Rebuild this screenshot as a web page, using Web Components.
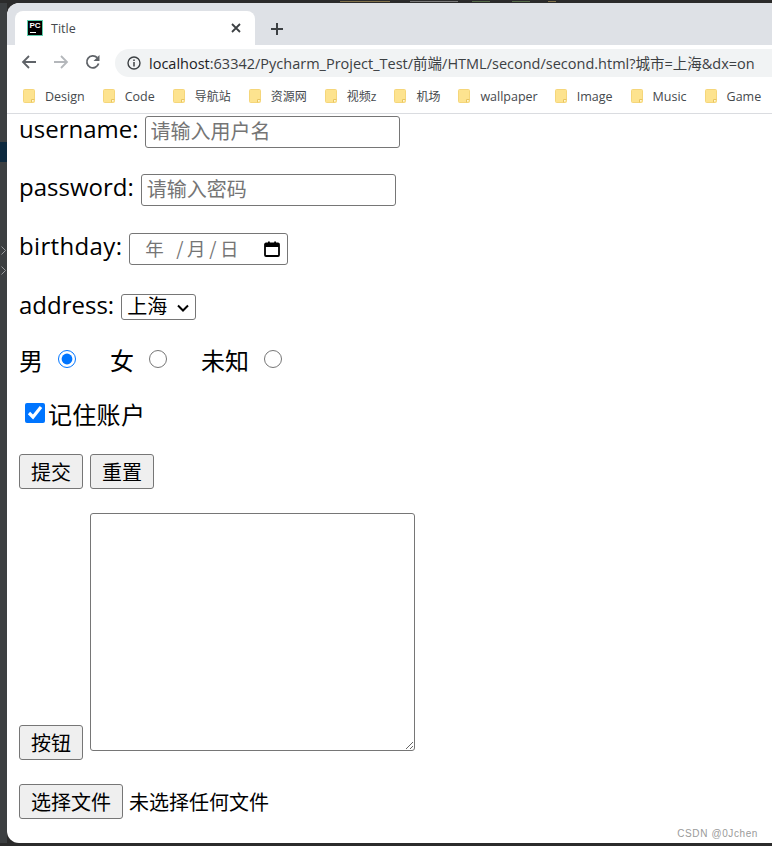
<!DOCTYPE html>
<html lang="zh-CN">
<head>
<meta charset="utf-8">
<title>Title</title>
<style>
  html, body { margin: 0; height: 100%; }
  body { background: #3c3f41; overflow: hidden; }
</style>
</head>
<body>
<browser-window>
  <form-page></form-page>
</browser-window>

<script>
const UI_FONT = `"Open Sans", "Noto Sans CJK SC", sans-serif`;

class BrowserTabs extends HTMLElement {
  constructor() {
    super();
    const shadow = this.attachShadow({ mode: 'open' });
    shadow.innerHTML = `
      <style>
        :host {
          display: flex;
          align-items: flex-end;
          height: 42px;
          padding-left: 8px;
          background: #dee1e6;
          border-radius: 12px 0 0 0;
          font: 12.5px ${UI_FONT};
          color: #45494d;
        }
        .tab {
          display: flex;
          align-items: center;
          box-sizing: border-box;
          width: 240px;
          height: 34px;
          padding: 0 14px 0 12px;
          background: #fff;
          border-radius: 8px 8px 0 0;
        }
        .favicon {
          position: relative;
          box-sizing: border-box;
          width: 16px;
          height: 16px;
          margin-right: 8px;
          background: #000;
          border: 1px solid #5fd0ad;
          color: #fff;
          font: bold 8px/9px "Liberation Sans", sans-serif;
          text-align: center;
        }
        .favicon::after {
          content: "";
          position: absolute;
          left: 2px;
          bottom: 2px;
          width: 6px;
          height: 1px;
          background: #fff;
        }
        .title { flex: 1; }
        svg { display: block; }
        .new { margin-left: 16px; margin-bottom: 10px; }
      </style>
      <div class="tab">
        <span class="favicon">PC</span>
        <span class="title">Title</span>
        <svg width="10" height="10" viewBox="0 0 10 10"><path d="M1 1l8 8M9 1l-8 8" stroke="#3c4043" stroke-width="1.8" fill="none"/></svg>
      </div>
      <svg class="new" width="12" height="12" viewBox="0 0 12 12"><path d="M6 0v12M0 6h12" stroke="#3c4043" stroke-width="2" fill="none"/></svg>
    `;
  }
}
customElements.define('browser-tabs', BrowserTabs);

class BrowserToolbar extends HTMLElement {
  constructor() {
    super();
    const shadow = this.attachShadow({ mode: 'open' });
    shadow.innerHTML = `
      <style>
        :host {
          display: flex;
          align-items: center;
          height: 34px;
          padding-left: 14px;
          background: #fff;
          font: 14.5px ${UI_FONT};
          color: #3c4043;
        }
        svg { display: block; flex: none; }
        .nav { display: flex; gap: 16px; margin-right: 14px; }
        .omnibox {
          flex: 1;
          display: flex;
          align-items: center;
          height: 28px;
          margin-top: 2px;
          padding-left: 12px;
          background: #f1f3f4;
          border-radius: 14px 0 0 14px;
          white-space: nowrap;
          overflow: hidden;
        }
        .omnibox svg { margin-right: 8px; }
        .url { margin-top: -2px; }
        .host { color: #202124; }
      </style>
      <div class="nav">
        <svg width="16" height="16" viewBox="0 0 16 16"><path d="M15 8H2M8 2L2 8l6 6" stroke="#5f6368" stroke-width="1.8" fill="none"/></svg>
        <svg width="16" height="16" viewBox="0 0 16 16"><path d="M1 8h13M8 2l6 6-6 6" stroke="#b4b7bb" stroke-width="1.8" fill="none"/></svg>
        <svg width="16" height="16" viewBox="0 0 16 16"><path d="M13.6 9.600A6 6 0 1 1 12.200 3.700" stroke="#5f6368" stroke-width="1.8" fill="none"/><path d="M14.500 1v6h-6z" fill="#5f6368"/></svg>
      </div>
      <div class="omnibox">
        <svg width="14" height="14" viewBox="0 0 14 14"><circle cx="7" cy="7" r="6" stroke="#3c4043" stroke-width="1.4" fill="none"/><path d="M7 6v4.400M7 3.400v1.500" stroke="#3c4043" stroke-width="1.5"/></svg>
        <span class="url"><span class="host">localhost</span>:63342/Pycharm_Project_Test/前端/HTML/second/second.html?城市=上海&amp;dx=on</span>
      </div>
    `;
  }
}
customElements.define('browser-toolbar', BrowserToolbar);

class BookmarkItem extends HTMLElement {
  constructor() {
    super();
    const shadow = this.attachShadow({ mode: 'open' });
    shadow.innerHTML = `
      <style>
        :host { display: flex; align-items: center; gap: 10px; flex: none; }
        svg { display: block; }
      </style>
      <svg width="12" height="14" viewBox="0 0 12 14">
        <path d="M.5 1.500a1 1 0 0 1 1-1h9a1 1 0 0 1 1 1v11a1 1 0 0 1-1 1h-9a1 1 0 0 1-1-1z" fill="#fde38f" stroke="#f5d67a"/>
        <path d="M8.500 13.500v-3h3" fill="#fff7d8" stroke="#e8c560"/>
      </svg>
      <slot></slot>
    `;
  }
}
customElements.define('bookmark-item', BookmarkItem);

class BookmarkBar extends HTMLElement {
  constructor() {
    super();
    const shadow = this.attachShadow({ mode: 'open' });
    shadow.innerHTML = `
      <style>
        :host {
          display: flex;
          align-items: center;
          gap: 18px;
          box-sizing: border-box;
          height: 35px;
          padding: 0 0 0 16px;
          background: #fff;
          border-bottom: 1px solid #dadce0;
          font: 12.5px ${UI_FONT};
          color: #45494d;
          white-space: nowrap;
          overflow: hidden;
        }
      </style>
      <slot></slot>
    `;
  }
}
customElements.define('bookmark-bar', BookmarkBar);

class BrowserWindow extends HTMLElement {
  constructor() {
    super();
    const shadow = this.attachShadow({ mode: 'open' });
    shadow.innerHTML = `
      <style>
        :host {
          display: block;
          position: relative;
          box-sizing: border-box;
          height: 846px;
          padding: 3px 0 3px 7px;
          background: #2b2b2b;
        }
        /* the IDE that peeks out behind the browser */
        .ide-code {
          position: absolute;
          left: 340px;
          top: 1px;
          width: 330px;
          height: 1px;
          opacity: .7;
          background: linear-gradient(90deg,
            #a8925a 0 50px, transparent 50px 70px,
            #9a9a9a 70px 118px, transparent 118px 132px,
            #6a8759 132px 150px, transparent 150px 172px,
            #6a8759 172px 190px, transparent 190px 208px,
            #a8925a 208px 216px, transparent 216px);
        }
        .ide-side { position: absolute; left: 0; top: 3px; bottom: 3px; width: 7px; background: #3c3f41; }
        .ide-side i { position: absolute; left: 0; top: 139px; width: 7px; height: 20px; background: #0d293e; }
        .ide-side svg { position: absolute; left: 1px; }
        .frame {
          position: relative;
          display: flex;
          flex-direction: column;
          height: 100%;
          background: #fff;
          border-radius: 12px 0 0 12px;
          overflow: hidden;
        }
        .view { flex: 1; overflow: hidden; }
        .mark {
          position: absolute;
          right: 14px;
          bottom: 4px;
          font: 10px "Liberation Sans", sans-serif;
          letter-spacing: .6px;
          color: #9a9a9a;
        }
        bookmark-item.zh { font-size: 12px; }
        bookmark-item.tight { margin-right: -1px; }
      </style>
      <div class="ide-code"></div>
      <div class="ide-side">
        <i></i>
        <svg style="top:243px" width="5" height="9" viewBox="0 0 5 9"><path d="M.5.5l4 4-4 4" stroke="#9a9c9e" fill="none"/></svg>
        <svg style="top:263px" width="5" height="9" viewBox="0 0 5 9"><path d="M.5.5l4 4-4 4" stroke="#9a9c9e" fill="none"/></svg>
      </div>
      <div class="frame">
        <browser-tabs></browser-tabs>
        <browser-toolbar></browser-toolbar>
        <bookmark-bar>
          <bookmark-item>Design</bookmark-item>
          <bookmark-item>Code</bookmark-item>
          <bookmark-item class="zh">导航站</bookmark-item>
          <bookmark-item class="zh">资源网</bookmark-item>
          <bookmark-item class="zh">视频z</bookmark-item>
          <bookmark-item class="zh">机场</bookmark-item>
          <bookmark-item class="tight">wallpaper</bookmark-item>
          <bookmark-item>Image</bookmark-item>
          <bookmark-item>Music</bookmark-item>
          <bookmark-item>Game</bookmark-item>
        </bookmark-bar>
        <div class="view"><slot></slot></div>
        <span class="mark">CSDN @0Jchen</span>
      </div>
    `;
  }
}
customElements.define('browser-window', BrowserWindow);

class FormPage extends HTMLElement {
  constructor() {
    super();
    const shadow = this.attachShadow({ mode: 'open' });
    shadow.innerHTML = `
      <style>
        :host {
          display: block;
          padding: 2px 0 0 12px;
          font: 24px "Open Sans", "Noto Sans CJK SC", sans-serif;
          color: #000;
        }
        .row { display: flex; align-items: center; gap: 7px; }
        .field { height: 32px; }
        .field > span { margin-top: -8px; }
        input[type=text], input[type=password], .date, select, textarea, button {
          font: 20px "Noto Sans CJK SC", sans-serif;
          box-sizing: border-box;
        }
        input[type=text], input[type=password] {
          width: 255px;
          height: 32px;
          padding: 0 5px 3px;
          line-height: 26px;
          border: 1px solid #767676;
          border-radius: 3px;
        }
        input::placeholder { color: #757575; }
        .date {
          display: flex;
          align-items: center;
          width: 159px;
          height: 32px;
          padding: 0 6px 0 15px;
          border: 1px solid #767676;
          border-radius: 3px;
          color: #757575;
        }
        .date .parts { flex: 1; display: flex; gap: 3.5px; font-size: 18.5px; margin-top: -2px; }
        .date .y { margin-right: 9px; }
        select {
          appearance: none;
          width: 75px;
          height: 26px;
          padding: 0 0 4px 5px;
          line-height: 22px;
          color: #000;
          background: #fff url("data:image/svg+xml,%3Csvg xmlns='http://www.w3.org/2000/svg' width='12' height='8'%3E%3Cpath d='M1 1.500l5 5 5-5' fill='none' stroke='%23000' stroke-width='2'/%3E%3C/svg%3E") no-repeat 55px 9px;
          border: 1px solid #767676;
          border-radius: 3px;
        }
        button {
          height: 35px;
          padding: 0 11px;
          background: #efefef;
          border: 1px solid #767676;
          border-radius: 3px;
          color: #000;
        }
        .radios { height: 34px; gap: 0; margin-top: 24px; }
        .radios span { margin-top: -3px; }
        input[type=radio] { width: 18px; height: 18px; margin: 0 34px 5px 15px; }
        input.mid { margin-right: 34px; }
        input.last { margin-left: 15px; }
        .check { height: 34px; margin-top: 20px; gap: 3px; }
        .check span { margin-top: -3px; letter-spacing: .3px; }
        input[type=checkbox] { width: 20px; height: 20px; margin: 0 0 4px 6px; }
        .actions { margin-top: 22px; }
        .area { align-items: flex-end; margin-top: 24px; }
        textarea { display: block; width: 325px; height: 238px; margin: 0 0 9px; border: 1px solid #767676; border-radius: 3px; }
        .file { margin-top: 24px; gap: 6px; font-size: 20px; }
      </style>
      <div class="row field" style="gap:6px"><span>username:</span><input type="text" placeholder="请输入用户名"></div>
      <div class="row field" style="margin-top:26px"><span>password:</span><input type="password" placeholder="请输入密码"></div>
      <div class="row field" style="margin-top:27px"><span style="letter-spacing:.35px">birthday:</span>
        <div class="date"><span class="parts"><span class="y">年</span><span>/</span><span>月</span><span>/</span><span>日</span></span>
          <svg width="18" height="18" viewBox="0 0 18 18"><path d="M2 4.500a1 1 0 0 1 1-1h12a1 1 0 0 1 1 1V15a1 1 0 0 1-1 1H3a1 1 0 0 1-1-1z" fill="none" stroke="#000" stroke-width="1.8"/><path d="M2 3.500h14V7H2zM5 1.500h1.800v2H5zM11.200 1.500h1.800v2h-1.800z" fill="#000"/></svg>
        </div>
      </div>
      <div class="row" style="margin-top:29px;height:26px"><span style="margin-top:-6px">address:</span><select><option>上海</option></select></div>
      <div class="row radios">
        <span>男</span><input type="radio" name="sex" checked>
        <span>女</span><input class="mid" type="radio" name="sex">
        <span>未知</span><input class="last" type="radio" name="sex">
      </div>
      <div class="row check"><input type="checkbox" checked><span>记住账户</span></div>
      <div class="row actions"><button>提交</button><button>重置</button></div>
      <div class="row area"><button>按钮</button><textarea></textarea></div>
      <div class="row file"><button>选择文件</button><span>未选择任何文件</span></div>
    `;
  }
}
customElements.define('form-page', FormPage);
</script>
</body>
</html>
